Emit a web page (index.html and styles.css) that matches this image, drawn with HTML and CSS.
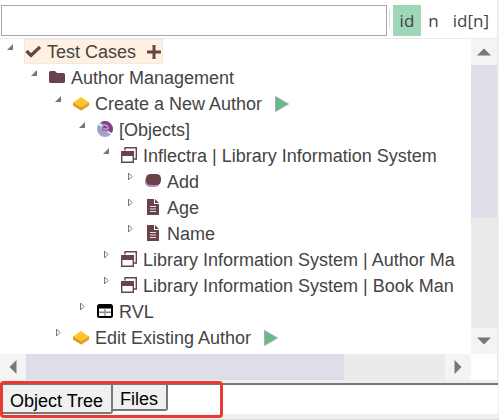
FILE: index.html
```html
<!DOCTYPE html>
<html lang="en">
<head>
<meta charset="utf-8">
<title>Object Tree</title>
<link rel="stylesheet" href="styles.css">
</head>
<body>
<svg class="defs" aria-hidden="true">
  <symbol id="open" viewBox="0 0 7 7"><path d="M7 0v7H0z" fill="#777"/></symbol>
  <symbol id="closed" viewBox="0 0 7 9"><path d="M1.5 1v7l3.5-3.5z" fill="#fff" stroke="#777"/></symbol>
  <symbol id="check" viewBox="0 0 16 16"><path d="M1.500 8l4.500 4.500L15 4" fill="none" stroke="#69434c" stroke-width="3.200"/></symbol>
  <symbol id="plus" viewBox="0 0 14 14"><path d="M7 0v14M0 7h14" fill="none" stroke="#69434c" stroke-width="3"/></symbol>
  <symbol id="folder" viewBox="0 0 16 16"><path d="M0 3.500Q0 2 1.500 2H6l2 2h6.500Q16 4 16 5.500v7q0 1.500-1.500 1.500h-13Q0 14 0 12.500z" fill="#69434c"/></symbol>
  <symbol id="case" viewBox="0 0 16 16"><path d="M0 7l8 5 8-5v3.500l-8 5-8-5z" fill="#ed8f1c"/><path d="M8 2l8 5.500-8 5-8-5z" fill="#fdc62d"/><path d="M8 12.500l8-5v3l-8 5z" fill="#f29b22"/></symbol>
  <symbol id="objects" viewBox="0 0 16 16"><circle cx="8" cy="8" r="8" fill="#a3a3ca"/><path d="M4 1.200A8 8 0 0 1 15.500 10.500L14 12l-3.500-2.500H5Q4.500 5 8.500 4.500L7 4z" fill="#873f8c"/><path d="M5 9a3.300 3.300 0 1 1 6-1H6" fill="none" stroke="#b9a5cc" stroke-width="1.500"/><path d="M1.500 2.500l3 2.500M11 10.500l3.500 2.500" stroke="#fff" stroke-width="1.500"/></symbol>
  <symbol id="windows" viewBox="0 0 16 16"><path d="M4 3.500V.7h11.300V12H12.500" fill="none" stroke="#69434c" stroke-width="1.400"/><path d="M.7 4.700h11.600v10.600H.7z" fill="#fff" stroke="#69434c" stroke-width="1.400"/><path d="M0 4h13v5H0z" fill="#69434c"/></symbol>
  <symbol id="button" viewBox="0 0 16 16"><rect x="0" y="3" width="15" height="11" rx="5" fill="#c08abf"/><rect x="1" y="1" width="15" height="11" rx="4.500" fill="#69434c"/></symbol>
  <symbol id="file" viewBox="0 0 16 16"><path d="M2 0h7v5h5v11H2z" fill="#69434c"/><path d="M10 0l4 4h-4z" fill="#69434c"/><path d="M5 7.500h6M5 10h6M5 12.500h6" stroke="#e8dfe1" stroke-width="1.200"/></symbol>
  <symbol id="table" viewBox="0 0 16 14"><rect width="16" height="14" rx="2.500" fill="#000"/><path d="M2 4.500h12V12H2z" fill="#fff"/><path d="M8 4.500V12M2 8.250h12" stroke="#888" stroke-width="1.300"/></symbol>
  <symbol id="play" viewBox="0 0 14 16"><path d="M.5.500L13.500 8 .5 15.500z" fill="#68b88e" stroke="#a5afa9"/></symbol>
  <symbol id="arrow" viewBox="0 0 14 8"><path d="M0 7.500L7 .5l7 7z" fill="#777"/></symbol>
</svg>

<main class="panel">
  <header class="toolbar">
    <input class="search" type="text" aria-label="Filter objects">
    <div class="modes">
      <button class="mode mode-on" type="button">id</button>
      <button class="mode" type="button">n</button>
      <button class="mode" type="button">id[n]</button>
    </div>
  </header>

  <section class="viewport">
    <ul class="tree" aria-label="Objects">
      <li>
        <div class="row"><button class="toggle" aria-label="Collapse"><svg class="open"><use href="#open"/></svg></button><span class="label selected"><svg class="icon"><use href="#check"/></svg>Test Cases<button class="add" aria-label="Add"><svg class="plus"><use href="#plus"/></svg></button></span></div>
        <ul>
          <li>
            <div class="row"><button class="toggle" aria-label="Collapse"><svg class="open"><use href="#open"/></svg></button><span class="label"><svg class="icon"><use href="#folder"/></svg>Author Management</span></div>
            <ul>
              <li>
                <div class="row"><button class="toggle" aria-label="Collapse"><svg class="open"><use href="#open"/></svg></button><span class="label"><svg class="icon"><use href="#case"/></svg>Create a New Author<button class="run" aria-label="Run"><svg class="play"><use href="#play"/></svg></button></span></div>
                <ul>
                  <li>
                    <div class="row"><button class="toggle" aria-label="Collapse"><svg class="open"><use href="#open"/></svg></button><span class="label"><svg class="icon"><use href="#objects"/></svg>[Objects]</span></div>
                    <ul>
                      <li>
                        <div class="row"><button class="toggle" aria-label="Collapse"><svg class="open"><use href="#open"/></svg></button><span class="label"><svg class="icon"><use href="#windows"/></svg>Inflectra | Library Information System</span></div>
                        <ul>
                          <li><div class="row"><button class="toggle" aria-label="Expand"><svg class="closed"><use href="#closed"/></svg></button><span class="label"><svg class="icon"><use href="#button"/></svg>Add</span></div></li>
                          <li><div class="row"><button class="toggle" aria-label="Expand"><svg class="closed"><use href="#closed"/></svg></button><span class="label"><svg class="icon"><use href="#file"/></svg>Age</span></div></li>
                          <li><div class="row"><button class="toggle" aria-label="Expand"><svg class="closed"><use href="#closed"/></svg></button><span class="label"><svg class="icon"><use href="#file"/></svg>Name</span></div></li>
                        </ul>
                      </li>
                      <li><div class="row"><button class="toggle" aria-label="Expand"><svg class="closed"><use href="#closed"/></svg></button><span class="label"><svg class="icon"><use href="#windows"/></svg>Library Information System | Author Ma</span></div></li>
                      <li><div class="row"><button class="toggle" aria-label="Expand"><svg class="closed"><use href="#closed"/></svg></button><span class="label"><svg class="icon"><use href="#windows"/></svg>Library Information System | Book Man</span></div></li>
                    </ul>
                  </li>
                  <li><div class="row"><button class="toggle" aria-label="Expand"><svg class="closed"><use href="#closed"/></svg></button><span class="label"><svg class="icon"><use href="#table"/></svg>RVL</span></div></li>
                </ul>
              </li>
              <li><div class="row"><button class="toggle" aria-label="Expand"><svg class="closed"><use href="#closed"/></svg></button><span class="label"><svg class="icon"><use href="#case"/></svg>Edit Existing Author<button class="run" aria-label="Run"><svg class="play"><use href="#play"/></svg></button></span></div></li>
            </ul>
          </li>
        </ul>
      </li>
    </ul>
    <div class="bar bar-y">
      <button class="step" aria-label="Scroll up"><svg class="arrow"><use href="#arrow"/></svg></button>
      <div class="track"><div class="thumb"></div></div>
      <button class="step" aria-label="Scroll down"><svg class="arrow down"><use href="#arrow"/></svg></button>
    </div>
    <div class="bar bar-x">
      <button class="step" aria-label="Scroll left"><svg class="arrow left"><use href="#arrow"/></svg></button>
      <div class="track"><div class="thumb"></div></div>
      <button class="step" aria-label="Scroll right"><svg class="arrow right"><use href="#arrow"/></svg></button>
    </div>
  </section>
</main>

<footer class="dock">
  <nav class="tabs">
    <button class="tab tab-on" type="button">Object Tree</button>
    <button class="tab" type="button">Files</button>
  </nav>
  <div class="callout"></div>
</footer>
</body>
</html>
```

FILE: styles.css
```css
* { box-sizing: border-box; }

body {
  margin: 0;
  min-height: 100vh;
  display: flex;
  flex-direction: column;
  background: #efefef;
  color: #444;
  font: 18px/26px "Liberation Sans", Arial, sans-serif;
}

button {
  padding: 0;
  border: 0;
  background: none;
  color: inherit;
  font: inherit;
}

svg { display: block; flex: none; }
ul { margin: 0; padding: 0; list-style: none; }
.defs { position: absolute; width: 0; height: 0; }

.panel {
  flex: 1;
  display: flex;
  flex-direction: column;
  background: #fff;
  border-right: 1px solid #ebebeb;
  margin-right: 1px;
}

.toolbar {
  display: flex;
  gap: 2px;
  padding: 5px 1px 2px 1px;
  border-bottom: 1px solid #ebebeb;
}

.search {
  flex: 1;
  min-width: 0;
  height: 31px;
  padding: 0 6px;
  border: 1px solid #a6a6a6;
  font: inherit;
}

.modes { display: flex; }

.modes::before {
  content: "";
  width: 1px;
  margin: 5px 3px 8px 0;
  background: #ddd;
}

.mode {
  padding: 0 7px;
  font: 17px/30px "Open Sans", "Segoe UI", sans-serif;
}

.mode-on { background: #a0d6b8; }

.viewport {
  flex: 1;
  display: grid;
  grid-template-columns: minmax(0, 1fr) 26px;
  grid-template-rows: 1fr 26px;
}

.tree { overflow: hidden; white-space: nowrap; padding-bottom: 3px; }
.tree ul { padding-left: 24px; }
.row { display: flex; height: 26px; }

.toggle {
  display: flex;
  align-items: flex-start;
  width: 24px;
  height: 26px;
  padding: 5px 0 0 7px;
}

.open { width: 6px; height: 6px; }
.closed { width: 7px; height: 9px; margin-top: -2px; }

.label {
  display: flex;
  align-items: center;
  gap: 6px;
  padding: 0 1px;
}

.selected {
  height: 25px;
  padding-right: 2px;
  background: #fff0e0;
  outline: 1px solid #ebebeb;
  outline-offset: -1px;
}

.icon { width: 16px; height: 16px; margin-bottom: 2px; }
.add { margin-left: 5px; }
.plus { width: 14px; height: 14px; }
.run { margin-left: 7px; }
.play { width: 14px; height: 16px; }

.bar { display: flex; }
.bar-y { flex-direction: column; }

.step {
  display: flex;
  flex: none;
  align-items: center;
  justify-content: center;
  width: 26px;
  height: 26px;
  background: #f4f4f4;
}

.arrow { width: 14px; height: 8px; }
.down { transform: rotate(180deg); }
.left { transform: rotate(-90deg); }
.right { transform: rotate(90deg); }

.track { flex: 1; background: #ebebeb; }
.thumb { background: #dedee8; }
.bar-x .thumb { width: 76%; height: 100%; }
.bar-y .track { display: grid; grid-template-rows: 58% 42%; }

.dock {
  position: relative;
  padding: 3px 1px 5px 0;
  border-bottom: 1px solid #ddd;
  background: #efefef;
}

.tabs {
  display: flex;
  align-items: flex-start;
  padding-left: 3px;
  border-top: 2px solid #777;
  background: #fff;
}

.tab {
  height: 26px;
  padding: 0 8px 0 7px;
  border: solid #777;
  border-width: 0 2px 2px 0;
  border-radius: 0 0 3px 0;
  background: #f0f0f0;
  color: #000;
  line-height: 28px;
}

.tab-on { height: 29px; line-height: 33px; }

.callout {
  position: absolute;
  top: 1px;
  left: 0;
  width: 223px;
  height: 37px;
  border: 3px solid #e63a32;
  border-radius: 4px;
  pointer-events: none;
}
```
